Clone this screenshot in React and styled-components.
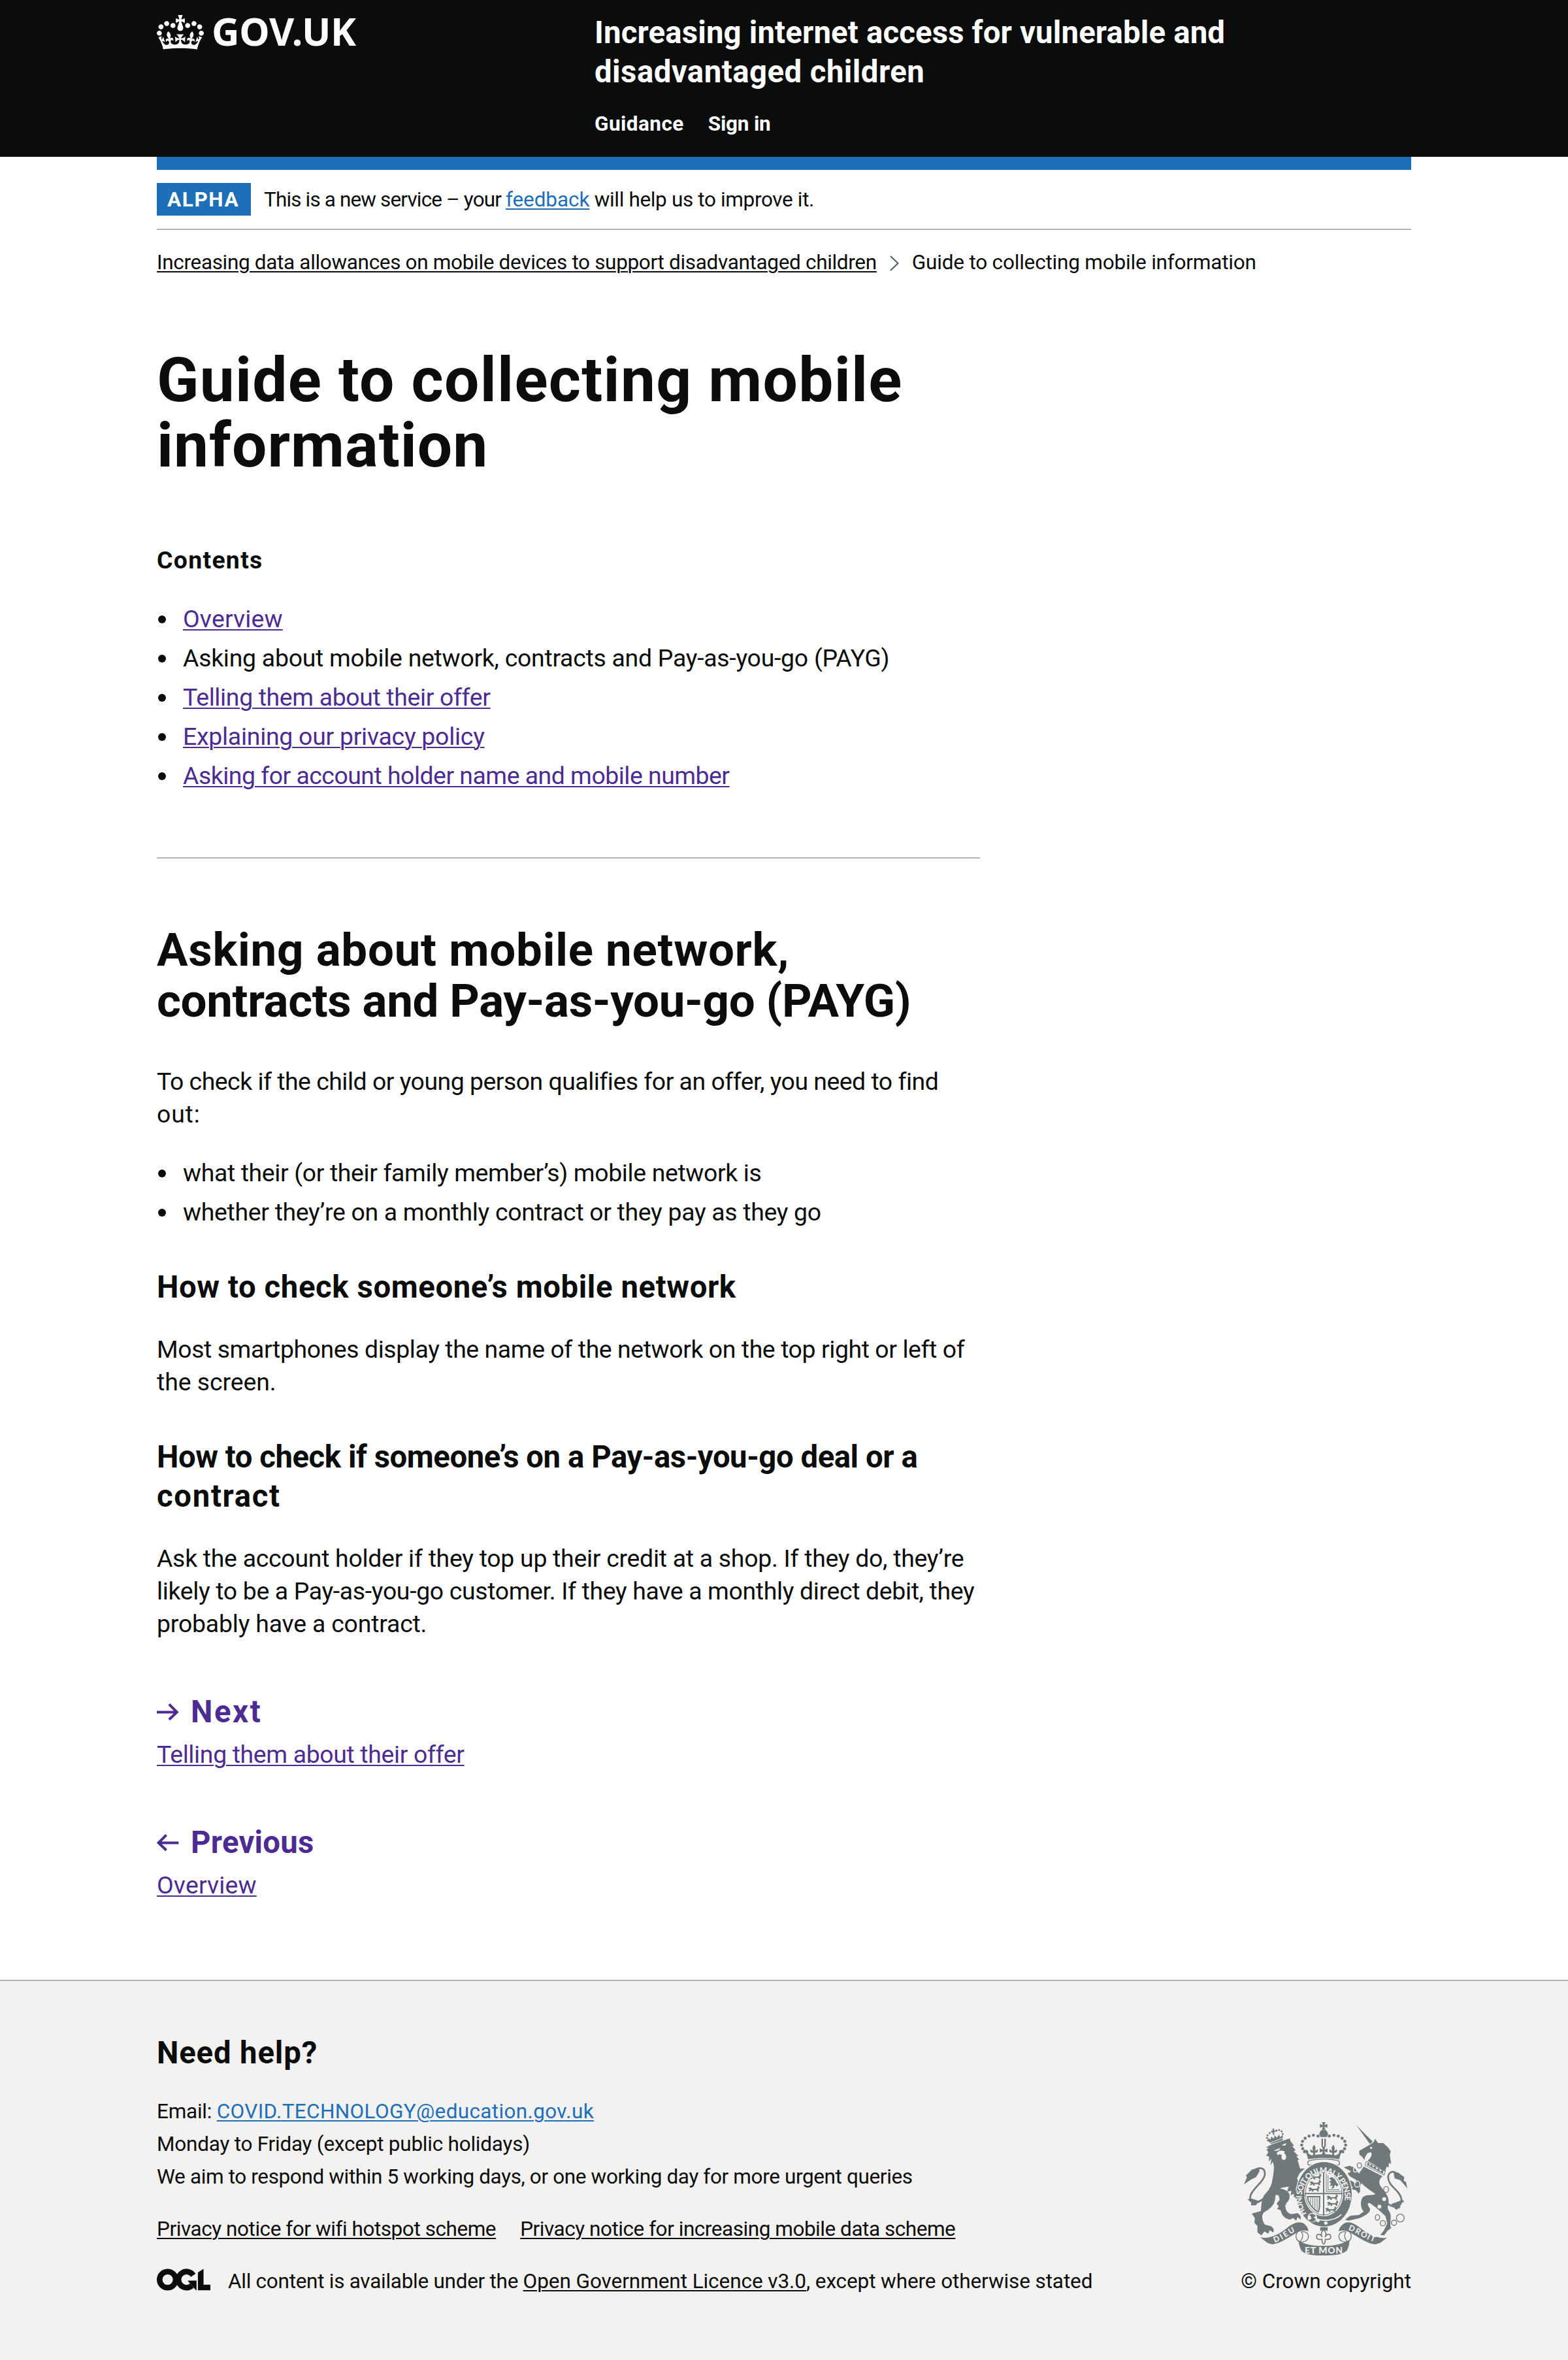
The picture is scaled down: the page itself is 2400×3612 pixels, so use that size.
import React from "react";
import styled, { createGlobalStyle, css } from "styled-components";

const ink = "#0b0c0c";
const blue = "#1d70b8";
const visited = "#4c2c92";
const rule = "#b1b4b6";
const crestGrey = "#6f797b";
const footerGrey = "#f3f2f1";

const GlobalStyle = createGlobalStyle`
  *, *::before, *::after { box-sizing: border-box; }
  body {
    margin: 0;
    background: #fff;
    color: ${ink};
    font-family: Roboto, "Noto Sans", Arial, sans-serif;
    -webkit-font-smoothing: antialiased;
  }
  h1, h2, h3, p, ul { margin: 0; padding: 0; font-weight: inherit; }
`;

/* ---------- type ---------- */

const Run = styled.span`
  letter-spacing: ${(p) => p.$track || 0}px;
  white-space: pre;
`;

const Line = styled(Run)`
  display: block;
`;

const Link = styled.a`
  color: ${(p) => p.$color || visited};
  letter-spacing: ${(p) => p.$track || 0}px;
  white-space: pre;
  text-decoration: underline;
  text-decoration-thickness: 2px;
  text-underline-offset: 3px;
`;

const small = css`
  font-size: 31.5px;
  line-height: 40px;
`;

/* ---------- header ---------- */

const Container = styled.div`
  width: 1920px;
  margin: 0 auto;
`;

const Header = styled.header`
  height: 240px;
  background: ${ink};
  color: #fff;
  font-weight: 700;
`;

const HeaderInner = styled(Container)`
  display: grid;
  grid-template-columns: 670px 1fr;
`;

const Logo = styled.a`
  display: flex;
  align-items: flex-start;
  gap: 12px;
  padding-top: 17px;
  color: #fff;
`;

const Crown = styled.svg`
  margin-top: 6px;
  width: 72px;
  height: 53px;
  flex: none;
`;

const LogoText = styled.span`
  font-family: "Noto Sans", sans-serif;
  font-size: 58.8px;
  line-height: 60px;
  letter-spacing: -0.3px;
`;

const HeaderContent = styled.div`
  padding-top: 20px;
`;

const ServiceName = styled.div`
  font-size: 47.3px;
  line-height: 60px;
`;

const Nav = styled.nav`
  ${small}
  display: flex;
  gap: 37px;
  margin-top: 30px;
`;

/* ---------- banner and breadcrumbs ---------- */

const BlueBar = styled(Container)`
  height: 20px;
  background: ${blue};
`;

const PhaseBanner = styled(Container)`
  display: flex;
  gap: 20px;
  height: 92px;
  padding: 20px 0;
  border-bottom: 2px solid ${rule};
  font-size: 31.5px;
  line-height: 52px;
`;

const Tag = styled.strong`
  width: 144px;
  height: 50px;
  padding-left: 16px;
  background: ${blue};
  color: #fff;
  font-weight: 700;
  letter-spacing: 1.6px;
`;

const Breadcrumbs = styled(Container)`
  ${small}
  display: flex;
  align-items: center;
  margin-top: 30px;
`;

const Chevron = styled.svg`
  width: 14px;
  height: 24px;
  margin: 1px 20px 0 20px;
`;

/* ---------- main column ---------- */

const Main = styled(Container).attrs({ as: "main" })`
  padding: 110px 660px 120px 0;
`;

const Title = styled.h1`
  font-size: 94.6px;
  line-height: 100px;
  font-weight: 700;
`;

const ContentsTitle = styled.h2`
  margin-top: 100px;
  font-size: 37.4px;
  line-height: 50px;
  font-weight: 700;
`;

const List = styled.ul`
  display: flex;
  flex-direction: column;
  gap: 10px;
  margin-top: 40px;
  list-style: none;
  font-size: 37.4px;
  line-height: 50px;
`;

const Item = styled.li`
  display: flex;
  &::before {
    content: "";
    width: 12px;
    height: 12px;
    margin: 20px 26px 0 2px;
    border-radius: 50%;
    background: ${ink};
  }
`;

const Divider = styled.hr`
  height: 2px;
  margin: 100px 0 101px;
  border: 0;
  background: ${rule};
`;

const SectionTitle = styled.h2`
  margin-bottom: 59px;
  font-size: 70.9px;
  line-height: 78px;
  font-weight: 700;
`;

const Subtitle = styled.h3`
  margin: 60px 0 40px;
  font-size: 47.3px;
  line-height: 60px;
  font-weight: 700;
`;

const Paragraph = styled.p`
  font-size: 37.4px;
  line-height: 50px;
`;

const Pager = styled.nav`
  margin-top: 80px;
  font-size: 37.4px;
  line-height: 50px;
`;

const PagerHeading = styled.div`
  display: flex;
  align-items: center;
  gap: 18px;
  height: 60px;
  margin-bottom: 10px;
  color: ${visited};
  font-size: 47.3px;
  line-height: 60px;
  font-weight: 700;
`;

const Arrow = styled.svg`
  width: 34px;
  height: 26px;
  margin-top: -1px;
  fill: ${visited};
`;

/* ---------- footer ---------- */

const Footer = styled.footer`
  height: 582px;
  padding-top: 80px;
  border-top: 2px solid ${rule};
  background: ${footerGrey};
`;

const FooterInner = styled(Container)`
  display: flex;
  justify-content: space-between;
  align-items: flex-end;
`;

const HelpTitle = styled.h2`
  margin-bottom: 35px;
  font-size: 47.3px;
  line-height: 60px;
  font-weight: 700;
`;

const HelpText = styled.div`
  font-size: 31.5px;
  line-height: 50px;
`;

const FooterLinks = styled.div`
  ${small}
  display: flex;
  gap: 37px;
  margin-top: 35px;
`;

const Licence = styled.div`
  ${small}
  display: flex;
  margin-top: 40px;
`;

const OglLogo = styled.svg`
  width: 82px;
  height: 34px;
  margin: 0 27px 0 0;
  flex: none;
`;

const Copyright = styled.div`
  ${small}
  display: flex;
  flex-direction: column;
  align-items: flex-end;
`;

const CrestSvg = styled.svg`
  width: 250px;
  height: 204px;
  margin: 0 6px 20px 0;
`;

const CrownMark = () => (
  <Crown viewBox="0 0 132 97" aria-hidden="true">
    <path
      fill="currentColor"
      fillRule="evenodd"
      d="M25 30.2c3.5 1.5 7.7-.2 9.1-3.7 1.5-3.6-.2-7.8-3.9-9.2-3.6-1.4-7.6.3-9.1 3.9-1.4 3.5.3 7.5 3.9 9zM9 39.5c3.6 1.5 7.8-.2 9.2-3.7 1.5-3.6-.2-7.8-3.9-9.1-3.6-1.5-7.6.2-9.1 3.8-1.4 3.5.3 7.5 3.8 9zM4.4 57.2c3.5 1.5 7.7-.2 9.1-3.8 1.5-3.6-.2-7.7-3.9-9.1-3.5-1.5-7.6.3-9.1 3.8-1.4 3.5.3 7.6 3.9 9.1zm38.3-21.4c3.5 1.5 7.7-.2 9.1-3.8 1.5-3.6-.2-7.7-3.9-9.1-3.6-1.5-7.6.3-9.1 3.8-1.3 3.6.4 7.7 3.9 9.1zm64.4-5.6c-3.6 1.5-7.8-.2-9.1-3.7-1.5-3.6.2-7.8 3.8-9.2 3.6-1.4 7.7.3 9.2 3.9 1.3 3.5-.4 7.5-3.9 9zm15.9 9.3c-3.6 1.5-7.7-.2-9.1-3.7-1.5-3.6.2-7.8 3.7-9.1 3.6-1.5 7.7.2 9.2 3.8 1.5 3.5-.3 7.5-3.8 9zm4.7 17.7c-3.6 1.5-7.8-.2-9.2-3.8-1.5-3.6.2-7.7 3.9-9.1 3.6-1.5 7.7.3 9.2 3.8 1.3 3.5-.4 7.6-3.9 9.1zM89.3 35.8c-3.6 1.5-7.8-.2-9.2-3.8-1.4-3.6.2-7.7 3.9-9.1 3.6-1.5 7.7.3 9.2 3.8 1.4 3.6-.3 7.7-3.9 9.1zM69.7 17.7l8.9 4.7V9.3l-8.9 2.8c-.2-.3-.5-.6-.9-.9L72.4 0H59.6l3.5 11.2c-.3.3-.6.5-.9.9l-8.8-2.8v13.1l8.8-4.7c.3.3.6.7.9.9l-5 15.4v.1c-.2.8-.4 1.6-.4 2.4 0 4.1 3.1 7.5 7 8.1h.2c.3 0 .7.1 1 .1.4 0 .7 0 1-.1h.2c4-.6 7.1-4.1 7.1-8.1 0-.8-.1-1.7-.4-2.4V34l-5.1-15.4c.4-.2.7-.6 1-.9zM66 92.8c16.9 0 32.8 1.1 47.1 3.2 4-16.9 8.9-26.7 14-33.5l-9.6-3.4c1 4.9 1.1 7.2 0 10.2-1.5-1.4-3-4.3-4.2-8.7L108.6 76c2.8-2 5-3.2 7.5-3.3-4.4 9.4-10 11.9-13.6 11.2-4.3-.8-6.3-4.6-5.6-7.9 1-4.7 5.7-5.9 8-.5 4.3-8.7-3-11.4-7.6-8.8 7.1-7.2 7.9-13.5 2.1-21.1-8 6.1-8.1 12.3-4.5 20.8-4.7-5.4-12.1-2.5-9.5 6.2 3.4-5.2 7.9-2 7.2 3.1-.6 4.3-6.4 7.8-13.5 7.2-10.3-.9-10.9-8-11.2-13.8 2.5-.5 7.1 1.8 11 7.3L80.2 60c-4.1 4.4-8 5.3-12.3 5.4 1.4-4.4 8-11.6 8-11.6H55.5s6.4 7.2 7.9 11.6c-4.2-.1-8-1-12.3-5.4l1.4 16.4c3.9-5.5 8.5-7.7 10.9-7.3-.3 5.8-.9 12.8-11.1 13.8-7.2.6-12.9-2.9-13.5-7.2-.7-5 3.8-8.3 7.1-3.1 2.7-8.7-4.6-11.6-9.4-6.2 3.7-8.5 3.6-14.7-4.6-20.8-5.8 7.6-5 13.9 2.2 21.1-4.7-2.6-11.9.1-7.7 8.8 2.3-5.5 7.1-4.2 8.1.5.7 3.3-1.3 7.1-5.7 7.9-3.5.7-9-1.8-13.5-11.2 2.5.1 4.7 1.3 7.5 3.3l-4.7-15.4c-1.2 4.4-2.7 7.2-4.3 8.7-1.1-3-.9-5.3 0-10.2l-9.5 3.4c5 6.9 9.9 16.7 14 33.5 14.8-2.1 30.8-3.2 47.7-3.2z"
    />
  </Crown>
);

const OglMark = () => (
  <OglLogo viewBox="0 0 483.2 195.7" aria-label="Open Government Licence">
    <g fill="none" stroke={ink} strokeWidth="50.7">
      <circle cx="97.8" cy="97.8" r="72.5" />
      <path d="M329.2 58.9A72.5 72.5 0 1 0 316 152.3" />
    </g>
    <polygon fill={ink} points="278.4,107.4 358.4,107.4 358.4,195.2 355.4,195.2 334,171 299,133.2" />
    <polygon fill={ink} points="421.5,142.8 421.5,0 370.8,32.4 370.8,193.5 483.2,193.5 483.2,142.8" />
  </OglLogo>
);

const pearls = [
  [412, 118], [391, 114], [371, 118], [353, 128], [341, 142], [337, 159], [342, 176], [350, 190],
];

const Fleur = ({ x, y, s = 1 }) => (
  <g transform={`translate(${x} ${y}) scale(${s})`}>
    <path d="M0-24C8-14 9-8 4 4L12 0C18-8 20 4 15 10C10 14 6 10 4 14L5 24H-5L-4 14C-6 10-10 14-15 10C-20 4-18-8-12 0L-4 4C-9-8-8-14 0-24Z" />
  </g>
);

const Cross = ({ x, y, s = 1 }) => (
  <path
    transform={`translate(${x} ${y}) scale(${s})`}
    d="M-9-18H9L3-4L18-9V9L3 4L9 18H-9L-3 4L-18 9V-9L-3-4Z"
  />
);

const Passant = ({ x, y }) => (
  <g transform={`translate(${x} ${y})`}>
    <path d="M-27-4L-20-11L-12-8L-8-4H10L18-10L14-14L20-17L26-10L20 0L22 8H15L12 2H-4L-2 9H-9L-12 2L-20 8L-26 5L-18 0Z" />
  </g>
);

const Crest = () => (
  <CrestSvg viewBox="72 54 750 612" aria-hidden="true">
    <defs>
      <path id="garter" d="M360 474A99 114 0 1 1 514 472" />
      <path id="dieu" d="M213 607C250 596 278 570 316 552" />
      <path id="droit" d="M550 549C590 560 620 590 678 606" />
    </defs>
    <g fill={crestGrey}>
      {/* crown */}
      <Cross x={438} y={71} s={0.95} />
      <path d="M418 110A20 22 0 0 1 458 110L452 122H424Z" />
      {pearls.map(([x, y]) => (
        <React.Fragment key={`${x}-${y}`}>
          <circle cx={x} cy={y} r="7" />
          <circle cx={876 - x} cy={y} r="7" />
        </React.Fragment>
      ))}
      <path d="M428 130H435V166H428ZM441 130H448V166H441Z" />
      <Fleur x={394} y={182} />
      <Fleur x={482} y={182} />
      <Cross x={438} y={184} />
      <path d="M347 180L366 184L368 198L382 206Q438 196 494 206L508 198L510 184L529 180C518 194 512 208 510 224Q438 212 366 224C364 208 358 194 347 180Z" />
      <path
        d="M374 230Q438 216 502 230Q512 233 511 242Q510 254 498 250Q438 238 378 250Q366 254 365 242Q364 233 374 230Z"
        fill={footerGrey}
        stroke={crestGrey}
        strokeWidth="4"
      />

      {/* lion */}
      <path d="M192 150L252 128L248 138L196 154ZM186 143L182 126L194 134L198 120L208 130L214 114L222 126L234 112L238 124L250 112L250 126L190 148Z" />
      <path d="M203 84L211 83L210 92L218 91V98L210 99L212 112L206 113L204 101L197 102V94L204 93Z" />
      {[[190, 104], [180, 114], [178, 126], [182, 138], [222, 92], [234, 90], [245, 96], [250, 108]].map(([x, y]) => (
        <circle key={`${x}${y}`} cx={x} cy={y} r="4.5" />
      ))}
      <path d="M176 180L186 172L172 170L200 156L283 128L286 142L302 162L294 164L310 184L300 186L322 210L312 210L326 226L318 228L330 268L352 266L328 288L316 312L328 344L346 378L350 396L338 410L320 412L308 394L300 400L303 382L286 390L290 370L270 372L278 350C262 352 246 352 238 360C264 362 286 374 281 402C278 420 260 428 262 442C264 456 270 472 290 476L318 472C330 478 336 490 332 500L318 490L312 506L298 494L282 502L262 494L248 480L240 458L224 452L232 442L222 428L236 410L232 392C222 384 214 388 216 402C214 436 186 456 164 468C150 482 156 508 168 524L196 532C208 540 212 550 206 560L190 550L184 566L166 556L152 574L134 560L134 530L120 516L122 494L108 474L150 462C152 436 152 410 166 388C190 364 198 346 202 322C208 290 214 256 204 236L194 252L198 222L186 234L188 212L174 208L184 192Z" />
      <path d="M196 352C182 404 118 446 101 410C92 368 168 330 168 290C168 266 148 260 130 270" fill="none" stroke={crestGrey} strokeWidth="8" />
      <path d="M72 340L86 306L80 300L108 272L140 262L144 278L128 306L104 318L86 330Z" />
      <path d="M88 408L106 404L142 416L126 436L104 436L106 424Z" />
      <g fill={footerGrey}>
        <path d="M210 184L240 172L232 184L216 186ZM244 160L266 150L262 162Z" />
        <path d="M222 196C236 180 252 184 260 190L256 196C270 204 268 226 256 228C244 226 242 214 246 206L236 200L228 206Z" />
      </g>

      {/* unicorn */}
      <path d="M588 68L664 144L650 154Z" />
      <path d="M601 186L646 160L668 146L674 130L688 150L712 150L734 170L746 188L742 204L748 246L738 240L736 262L728 258L716 284C694 262 664 246 640 232C656 216 664 202 654 192L640 196L628 214L626 228L612 210L602 204Z" />
      <path d="M634 234L716 278L722 274L716 298L628 252Z" fill={footerGrey} stroke={crestGrey} strokeWidth="3" />
      <path d="M636 250L644 238L650 254L660 246L664 262L676 254L680 272L692 264L696 280L710 274L712 292Z" />
      <path d="M622 258L708 302C690 318 690 334 702 352C724 380 744 402 734 436C726 456 746 466 746 484L744 530L748 540L732 552L716 574L698 572L714 552L730 520L722 486C704 470 680 444 650 426C640 420 636 432 650 450C656 464 640 478 604 494L552 506L536 502L560 484L600 480L622 464C604 446 606 410 620 396C640 384 660 392 676 384C650 366 626 350 612 334L604 350L606 372L598 382L586 366L566 362L572 352L556 344L536 322L562 322L588 336L586 318L560 304L548 290L564 280L530 262L556 254L578 262L600 290Z" />
      <path d="M722 420C760 456 800 446 795 408C790 366 734 350 734 306C736 284 752 278 766 284" fill="none" stroke={crestGrey} strokeWidth="8" />
      <path d="M822 358L816 328L806 324L808 306L780 286L758 280L764 312L790 320Z" />
      <path d="M748 430L770 422L800 410L808 420L788 426L790 446L770 456Z" />
      <circle cx="656" cy="172" r="5" fill={footerGrey} />
      <g fill={footerGrey}>
        <circle cx="716" cy="407" r="9" />
        <circle cx="694" cy="442" r="9" />
      </g>
      <g fill="none" stroke={crestGrey} strokeWidth="4">
        <ellipse cx="602" cy="253" rx="10" ry="12" />
        <ellipse cx="584" cy="272" rx="9" ry="11" stroke={footerGrey} />
        <ellipse cx="592" cy="338" rx="12" ry="14" stroke={footerGrey} />
        <ellipse cx="725" cy="363" rx="11" ry="14" />
        <ellipse cx="685" cy="491" rx="10" ry="13" />
        <circle cx="710" cy="518" r="12" />
        <circle cx="761" cy="516" r="12" />
        <circle cx="790" cy="494" r="18" />
      </g>

      {/* garter and shield */}
      <ellipse cx="440" cy="385" rx="131" ry="152" fill={footerGrey} />
      <ellipse cx="440" cy="385" rx="127" ry="148" />
      <ellipse cx="438" cy="382" rx="90" ry="104" fill={footerGrey} />
      <ellipse cx="438" cy="382" rx="84" ry="98" fill="none" stroke={crestGrey} strokeWidth="3" />
      <path d="M435 280H441V484H435ZM350 379H526V385H350Z" />
      <Passant x={402} y={308} />
      <Passant x={400} y={336} />
      <Passant x={394} y={364} />
      <Passant x={478} y={402} />
      <Passant x={480} y={430} />
      <Passant x={472} y={458} />
      <path d="M450 290V372H518M458 298V364H510" fill="none" stroke={crestGrey} strokeWidth="3" />
      <path d="M462 312L476 306L490 316L498 332L506 340L500 350L490 342L484 356L474 360L480 344L466 348L472 334L462 328L474 322Z" />
      <path d="M364 396H420C416 430 424 450 412 466L400 458C380 440 366 424 364 396Z" fill="none" stroke={crestGrey} strokeWidth="6" />
      <path d="M378 400V428M388 400V440M398 400V450M408 400V456" fill="none" stroke={crestGrey} strokeWidth="3" />
      <path d="M372 478C400 506 470 520 520 478" fill="none" stroke={footerGrey} strokeWidth="5" />
      <circle cx="386" cy="492" r="22" fill={footerGrey} />
      <path d="M372 480C382 470 398 476 402 486L392 490L402 500C396 514 378 516 368 504L382 498L380 488Z" />
      <circle cx="412" cy="505" r="8" fill={footerGrey} />
      <circle cx="448" cy="517" r="8" fill={footerGrey} />
      <path d="M298 376L334 358L352 392L340 412L318 414L306 398Z" />

      {/* motto ribbon */}
      <path d="M146 582C180 592 226 574 262 546C290 522 316 508 340 516C358 524 366 540 369 554C350 548 334 552 318 560C282 578 240 612 200 615L180 608Z" />
      <path d="M730 584C700 592 650 574 614 546C586 522 560 508 538 516C520 524 510 540 507 554C526 548 542 552 558 560C594 578 636 612 676 615L698 608Z" />
      <g fill={footerGrey} stroke={crestGrey} strokeWidth="4">
        <path d="M318 560C306 574 310 594 328 604C350 606 368 598 368 578C368 562 352 554 336 558C344 570 344 586 330 602" />
        <path d="M558 560C570 574 566 594 548 604C526 606 508 598 508 578C508 562 524 554 540 558C532 570 532 586 546 602" />
      </g>
      <path d="M322 596C356 620 400 622 438 622C480 622 522 616 556 594C558 614 550 634 544 644C520 664 480 666 438 666C396 666 356 664 336 644C328 630 324 612 322 596Z" />
      <path d="M422 536H456V554L438 548L422 554Z" />
      <g fill={footerGrey} stroke={crestGrey} strokeWidth="5">
        <path d="M438 548C452 560 450 574 444 582C454 562 474 566 470 584C466 596 454 592 446 592L444 606C440 616 436 616 432 606L430 592C422 592 410 596 406 584C402 566 422 562 432 582C426 574 424 560 438 548Z" />
      </g>
    </g>
    <g fill={footerGrey} fontFamily="Lato, sans-serif" fontWeight="900">
      <text fontSize="36">
        <textPath href="#garter" textLength="425">HONI SOIT QUI MAL Y PENSE</textPath>
      </text>
      <text fontSize="36">
        <textPath href="#dieu" textLength="108">DIEU</textPath>
      </text>
      <text fontSize="36">
        <textPath href="#droit" textLength="132">DROIT</textPath>
      </text>
      <text x="438" y="656" fontSize="42" textAnchor="middle" textLength="174">
        ET MON
      </text>
    </g>
  </CrestSvg>
);

const contents = [
  { text: "Overview", track: 0.15, link: true },
  { text: "Asking about mobile network, contracts and Pay-as-you-go (PAYG)", track: -0.26 },
  { text: "Telling them about their offer", track: -0.35, link: true },
  { text: "Explaining our privacy policy", track: -0.26, link: true },
  { text: "Asking for account holder name and mobile number", track: -0.5, link: true },
];

const checks = [
  { text: "what their (or their family member’s) mobile network is", track: -0.36 },
  { text: "whether they’re on a monthly contract or they pay as they go", track: -0.31 },
];

export default function App() {
  return (
    <>
      <GlobalStyle />
      <Header>
        <HeaderInner>
          <Logo>
            <CrownMark />
            <LogoText>GOV.UK</LogoText>
          </Logo>
          <HeaderContent>
            <ServiceName>
              <Line $track={0.17}>Increasing internet access for vulnerable and</Line>
              <Line $track={0.48}>disadvantaged children</Line>
            </ServiceName>
            <Nav>
              <Run $track={0.45}>Guidance</Run>
              <Run $track={-0.21}>Sign in</Run>
            </Nav>
          </HeaderContent>
        </HeaderInner>
      </Header>
      <BlueBar />
      <PhaseBanner>
        <Tag>ALPHA</Tag>
        <div>
          <Run $track={-0.86}>This is a new service – your </Run>
          <Link $color={blue} $track={-0.1}>feedback</Link>
          <Run $track={-0.35}> will help us to improve it.</Run>
        </div>
      </PhaseBanner>
      <Breadcrumbs>
        <Link $color={ink} $track={-0.33}>
          Increasing data allowances on mobile devices to support disadvantaged children
        </Link>
        <Chevron viewBox="0 0 14 24" aria-hidden="true">
          <path d="M1 1L12.5 12L1 23" fill="none" stroke="#505a5f" strokeWidth="2" />
        </Chevron>
        <Run $track={-0.19}>Guide to collecting mobile information</Run>
      </Breadcrumbs>

      <Main>
        <Title>
          <Line $track={1.28}>Guide to collecting mobile</Line>
          <Line $track={1.02}>information</Line>
        </Title>
        <ContentsTitle>
          <Run $track={1.3}>Contents</Run>
        </ContentsTitle>
        <List>
          {contents.map((c) => (
            <Item key={c.text}>
              {c.link ? <Link $track={c.track}>{c.text}</Link> : <Run $track={c.track}>{c.text}</Run>}
            </Item>
          ))}
        </List>
        <Divider />
        <SectionTitle>
          <Line $track={0.73}>Asking about mobile network,</Line>
          <Line $track={-0.38}>contracts and Pay-as-you-go (PAYG)</Line>
        </SectionTitle>
        <Paragraph>
          <Line $track={-0.5}>To check if the child or young person qualifies for an offer, you need to find</Line>
          <Line $track={0.83}>out:</Line>
        </Paragraph>
        <List>
          {checks.map((c) => (
            <Item key={c.text}>
              <Run $track={c.track}>{c.text}</Run>
            </Item>
          ))}
        </List>
        <Subtitle>
          <Line $track={0.6}>How to check someone’s mobile network</Line>
        </Subtitle>
        <Paragraph>
          <Line $track={-0.41}>Most smartphones display the name of the network on the top right or left of</Line>
          <Line $track={-0.07}>the screen.</Line>
        </Paragraph>
        <Subtitle>
          <Line $track={-0.45}>How to check if someone’s on a Pay-as-you-go deal or a</Line>
          <Line $track={1.68}>contract</Line>
        </Subtitle>
        <Paragraph>
          <Line $track={-0.27}>Ask the account holder if they top up their credit at a shop. If they do, they’re</Line>
          <Line $track={-0.34}>likely to be a Pay-as-you-go customer. If they have a monthly direct debit, they</Line>
          <Line $track={-0.19}>probably have a contract.</Line>
        </Paragraph>
        <Pager>
          <PagerHeading>
            <Arrow viewBox="0 0 17 13">
              <path d="m10.107-0.0078125-1.4136 1.414 4.2926 4.293h-12.986v2h12.896l-4.1855 3.9766 1.377 1.4492 6.7441-6.4062-6.7246-6.7266z" />
            </Arrow>
            <Run $track={2.6}>Next</Run>
          </PagerHeading>
          <Link $track={-0.35}>Telling them about their offer</Link>
        </Pager>
        <Pager>
          <PagerHeading>
            <Arrow viewBox="0 0 17 13">
              <path d="m6.5938-0.0078125-6.7266 6.7266 6.7441 6.4062 1.377-1.449-4.1856-3.9768h12.896v-2h-12.984l4.2931-4.293-1.414-1.414z" />
            </Arrow>
            <Run $track={0.26}>Previous</Run>
          </PagerHeading>
          <Link $track={0.15}>Overview</Link>
        </Pager>
      </Main>

      <Footer>
        <FooterInner>
          <div>
            <HelpTitle>
              <Run $track={0.85}>Need help?</Run>
            </HelpTitle>
            <HelpText>
              <div>
                <Run $track={-0.25}>Email: </Run>
                <Link $color={blue} $track={0.35}>COVID.TECHNOLOGY@education.gov.uk</Link>
              </div>
              <Line $track={-0.23}>Monday to Friday (except public holidays)</Line>
              <Line $track={-0.37}>We aim to respond within 5 working days, or one working day for more urgent queries</Line>
            </HelpText>
            <FooterLinks>
              <Link $color={ink} $track={-0.44}>Privacy notice for wifi hotspot scheme</Link>
              <Link $color={ink} $track={-0.46}>Privacy notice for increasing mobile data scheme</Link>
            </FooterLinks>
            <Licence>
              <OglMark />
              <div>
                <Run $track={-0.27}>All content is available under the </Run>
                <Link $color={ink} $track={-0.07}>Open Government Licence v3.0</Link>
                <Run $track={-0.1}>, except where otherwise stated</Run>
              </div>
            </Licence>
          </div>
          <Copyright>
            <Crest />
            <Run>© Crown copyright</Run>
          </Copyright>
        </FooterInner>
      </Footer>
    </>
  );
}
